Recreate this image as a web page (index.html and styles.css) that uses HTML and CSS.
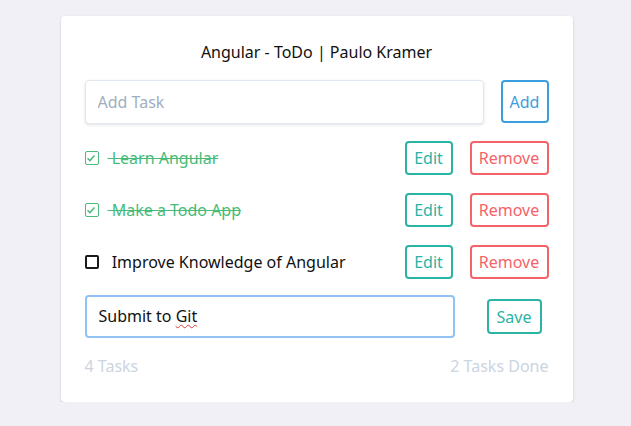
FILE: index.html
```html
<!DOCTYPE html>
<html>
<head>
<meta charset="utf-8">
<link rel="stylesheet" href="styles.css">
</head>
<body>
<div class="card">
  <h1 class="title">Angular - ToDo | Paulo Kramer</h1>
  <div class="add-row">
    <input class="add-input" type="text" placeholder="Add Task">
    <button class="btn btn-blue add-btn">Add</button>
  </div>
  <ul class="list">
    <li class="item">
      <span class="check done"><svg viewBox="0 0 14 14" width="14" height="14"><path d="M3.5 7.2 L6 9.6 L10.5 4.6" fill="none" stroke="#48bb78" stroke-width="1.5"/></svg></span>
      <span class="label done">&nbsp;Learn Angular</span>
      <button class="btn btn-teal">Edit</button>
      <button class="btn btn-red">Remove</button>
    </li>
    <li class="item">
      <span class="check done"><svg viewBox="0 0 14 14" width="14" height="14"><path d="M3.5 7.2 L6 9.6 L10.5 4.6" fill="none" stroke="#48bb78" stroke-width="1.5"/></svg></span>
      <span class="label done">&nbsp;Make a Todo App</span>
      <button class="btn btn-teal">Edit</button>
      <button class="btn btn-red">Remove</button>
    </li>
    <li class="item">
      <span class="check"></span>
      <span class="label">&nbsp;Improve Knowledge of Angular</span>
      <button class="btn btn-teal">Edit</button>
      <button class="btn btn-red">Remove</button>
    </li>
  </ul>
  <div class="edit-row">
    <div class="edit-input"><span class="edit-text">Submit to <span class="spell">Git</span></span></div>
    <button class="btn btn-teal save-btn">Save</button>
  </div>
  <div class="footer">
    <span>4 Tasks</span>
    <span>2 Tasks Done</span>
  </div>
</div>
</body>
</html>
```
FILE: styles.css
```css
* { box-sizing: border-box; }
html, body { margin: 0; padding: 0; }
body {
  background: #f1f0f6;
  font-family: "Noto Sans", sans-serif;
  font-size: 16px;
  color: #1a1a1a;
  padding-top: 16px;
  padding-left: 2px;
}
.card {
  width: 512px;
  margin: 0 auto;
  background: #fff;
  border-radius: 4px;
  box-shadow: 0 1px 3px rgba(0,0,0,0.12), 0 1px 2px rgba(0,0,0,0.06);
  padding: 24px;
}
.title {
  margin: 0 0 16px;
  font-size: 16px;
  font-weight: 400;
  line-height: 24px;
  text-align: center;
  color: #111;
}
.add-row {
  display: flex;
  align-items: flex-start;
}
.add-input {
  flex: 1;
  height: 44px;
  border: 1px solid #e2e8f0;
  border-radius: 4px;
  box-shadow: 0 1px 3px rgba(0,0,0,0.12);
  padding: 0 12px;
  font-family: inherit;
  font-size: 16px;
  margin-right: 17px;
  outline: none;
}
.add-input::placeholder { color: #a0aec0; }
.btn {
  font-family: inherit;
  font-size: 16px;
  background: #fff;
  border: 2px solid;
  border-radius: 4px;
  padding: 0 8px;
  height: 34px;
  line-height: 28px;
  cursor: pointer;
}
.add-btn { height: 43px; width: 48px; padding: 0; }
.btn-blue { border-color: #3b9ede; color: #3b9ede; }
.btn-teal { border-color: #2bb3a6; color: #2bb3a6; }
.btn-red { border-color: #f5636a; color: #f5636a; }
.list {
  list-style: none;
  margin: 8px 0 0;
  padding: 0;
}
.item {
  display: flex;
  align-items: center;
  height: 52px;
}
.item .btn-teal { width: 48px; padding: 0; }
.item .btn-red { width: 79px; padding: 0; margin-left: 17px; }
.check {
  width: 14px;
  height: 14px;
  border: 2px solid #1a1a1a;
  border-radius: 2px;
  flex-shrink: 0;
  position: relative;
}
.check.done { border: 1.5px solid #48bb78; }
.check svg { position: absolute; left: -1.5px; top: -1.5px; }
.label {
  flex: 1;
  margin-left: 9px;
  line-height: 24px;
  color: #111;
}
.label.done {
  color: #48bb78;
  text-decoration: line-through;
}
.edit-row {
  display: flex;
  align-items: center;
  margin-top: 7px;
}
.edit-input {
  width: 370px;
  height: 43px;
  border: 2px solid #90c2f4;
  border-radius: 4px;
  padding: 0 12px;
  line-height: 39px;
  color: #111;
}
.spell {
  text-decoration: underline wavy #e53e3e;
  text-decoration-thickness: 1px;
  text-underline-offset: 2px;
}
.save-btn { height: 35px; width: 55px; padding: 0; margin-left: 32px; }
.footer {
  display: flex;
  justify-content: space-between;
  margin-top: 16px;
  line-height: 24px;
  color: #cbd5e0;
}
```
